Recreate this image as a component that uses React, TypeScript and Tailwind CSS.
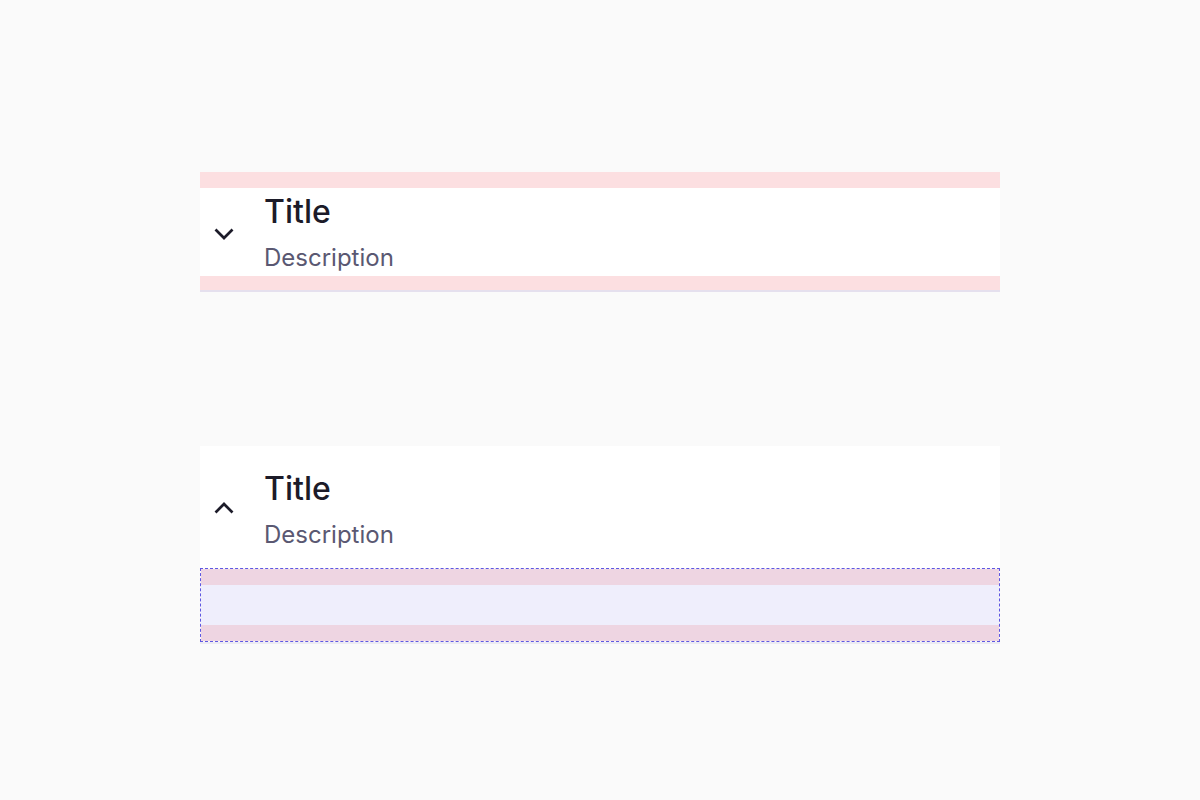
import React from "react";

function Chevron({ up }: { up?: boolean }) {
  return (
    <svg width="24" height="24" viewBox="0 0 24 24" fill="none" className="block">
      <polyline
        points={up ? "3.5,15.5 12,7 20.5,15.5" : "3.5,9.5 12,18 20.5,9.5"}
        stroke="#1c1b29"
        strokeWidth="2.7"
        strokeLinejoin="miter"
        strokeLinecap="butt"
      />
    </svg>
  );
}

function HeaderContent({ up }: { up?: boolean }) {
  return (
    <div className="flex h-[88px] items-center bg-white">
      <div className="flex w-12 items-center justify-center">
        <Chevron up={up} />
      </div>
      <div className="ml-4 flex h-full flex-col pt-1">
        <div className="text-[32px] font-medium leading-[40px] text-[#1c1b29]">Title</div>
        <div className="mt-2 text-[24px] leading-[36px] text-[#5a5872]">Description</div>
      </div>
    </div>
  );
}

export default function App() {
  return (
    <div
      className="flex min-h-[800px] w-full flex-col items-center bg-[#fafafa] pt-[172px]"
      style={{ fontFamily: "Inter, 'Noto Sans', sans-serif" }}
    >
      {/* Collapsed */}
      <div className="flex w-[800px] flex-col">
        <div className="h-4 bg-[#fcdfe1]" />
        <HeaderContent />
        <div className="h-[14px] bg-[#fcdfe1]" />
        <div className="h-[2px] bg-[#e5e0ee]" />
      </div>

      {/* Expanded */}
      <div className="mt-[154px] flex w-[800px] flex-col">
        <div className="flex flex-col bg-white pt-[19px] pb-[15px]">
          <HeaderContent up />
        </div>
        <div className="flex flex-col border border-dashed border-[#5f57e2]">
          <div className="h-4 bg-[#eed5e2]" />
          <div className="h-10 bg-[#efeefc]" />
          <div className="h-4 bg-[#eed5e2]" />
        </div>
        <div className="h-[2px] bg-[#ecebf3]" />
      </div>
    </div>
  );
}
